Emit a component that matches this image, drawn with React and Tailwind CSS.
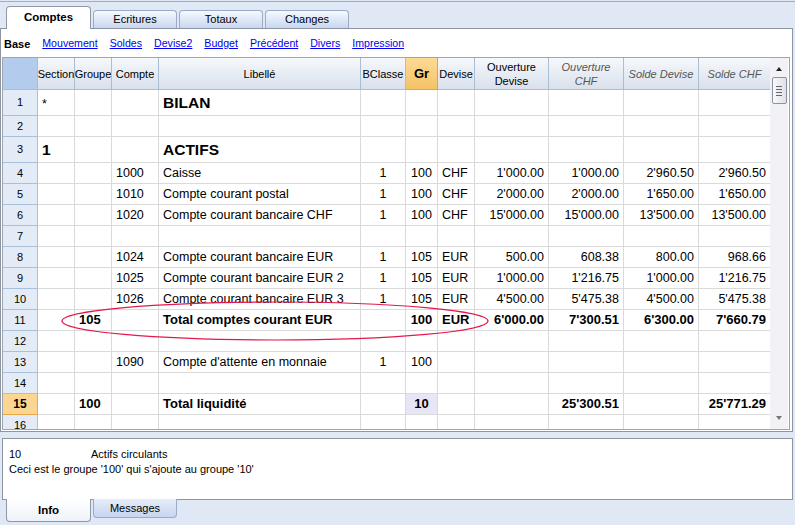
import React from 'react';

const COLS = 'grid grid-cols-[35px_37px_37px_47px_202px_45px_32px_37px_74px_75px_75px_72px]';

const rows = [
  { n: 1, tall: true, section: '*', lib: 'BILAN', big: true },
  { n: 2 },
  { n: 3, tall: true, section: '1', lib: 'ACTIFS', big: true },
  { n: 4, compte: '1000', lib: 'Caisse', bc: '1', gr: '100', dev: 'CHF', od: "1'000.00", oc: "1'000.00", sd: "2'960.50", sc: "2'960.50" },
  { n: 5, compte: '1010', lib: 'Compte courant postal', bc: '1', gr: '100', dev: 'CHF', od: "2'000.00", oc: "2'000.00", sd: "1'650.00", sc: "1'650.00" },
  { n: 6, compte: '1020', lib: 'Compte courant bancaire CHF', bc: '1', gr: '100', dev: 'CHF', od: "15'000.00", oc: "15'000.00", sd: "13'500.00", sc: "13'500.00" },
  { n: 7 },
  { n: 8, compte: '1024', lib: 'Compte courant bancaire EUR', bc: '1', gr: '105', dev: 'EUR', od: '500.00', oc: '608.38', sd: '800.00', sc: '968.66' },
  { n: 9, compte: '1025', lib: 'Compte courant bancaire EUR 2', bc: '1', gr: '105', dev: 'EUR', od: "1'000.00", oc: "1'216.75", sd: "1'000.00", sc: "1'216.75" },
  { n: 10, compte: '1026', lib: 'Compte courant bancaire EUR 3', bc: '1', gr: '105', dev: 'EUR', od: "4'500.00", oc: "5'475.38", sd: "4'500.00", sc: "5'475.38" },
  { n: 11, bold: true, groupe: '105', lib: 'Total comptes courant EUR', gr: '100', dev: 'EUR', od: "6'000.00", oc: "7'300.51", sd: "6'300.00", sc: "7'660.79" },
  { n: 12 },
  { n: 13, compte: '1090', lib: "Compte d'attente en monnaie", bc: '1', gr: '100' },
  { n: 14 },
  { n: 15, bold: true, current: true, groupe: '100', lib: 'Total liquidité', gr: '10', oc: "25'300.51", sc: "25'771.29" },
  { n: 16 },
];

const links = ['Mouvement', 'Soldes', 'Devise2', 'Budget', 'Précédent', 'Divers', 'Impression'];

function HeadCell({ children, italic, center = true }) {
  return (
    <div
      className={`flex items-center overflow-hidden whitespace-nowrap border-r border-b border-[#a9bdd5] bg-linear-to-b from-[#f6f8fb] to-[#d9e1ec] text-[11px] leading-[14px] ${
        center ? 'justify-center text-center' : ''
      } ${italic ? 'italic text-[#555]' : 'text-black'}`}
    >
      {children}
    </div>
  );
}

function Cell({ children, align = 'left', bold, big, extra = '' }) {
  const alignCls = align === 'right' ? 'justify-end pr-[4px]' : align === 'center' ? 'justify-center' : 'pl-[4px]';
  const font = big ? 'text-[15.5px] font-bold' : bold ? 'text-[13px] font-bold' : 'text-[12.5px]';
  return (
    <div className={`flex items-center overflow-hidden whitespace-nowrap border-r border-b border-[#dadada] ${alignCls} ${font} ${extra}`}>
      {children}
    </div>
  );
}

function Row({ r }) {
  const b = r.bold;
  return (
    <div className={`${COLS} ${r.tall ? 'h-[26px]' : 'h-[21px]'}`}>
      <div
        className={`flex items-center justify-center border-r border-b text-[11px] ${
          r.current ? 'bg-[#fcd592] border-[#eaa845] font-bold text-[12px]' : 'bg-[#e3ebf6] border-[#a9c0da]'
        }`}
      >
        {r.n}
      </div>
      <Cell big={r.section === '1'} extra={r.section === '*' ? 'items-start pt-[5px]' : ''}>{r.section}</Cell>
      <Cell bold={b}>{r.groupe}</Cell>
      <Cell>{r.compte}</Cell>
      <Cell bold={b} big={r.big}>{r.lib}</Cell>
      <Cell align="center">{r.bc}</Cell>
      <Cell align="center" bold={b} extra={r.current ? 'bg-[#e6e6f6]' : ''}>{r.gr}</Cell>
      <Cell bold={b}>{r.dev}</Cell>
      <Cell align="right" bold={b}>{r.od}</Cell>
      <Cell align="right" bold={b}>{r.oc}</Cell>
      <Cell align="right" bold={b}>{r.sd}</Cell>
      <Cell align="right" bold={b}>{r.sc}</Cell>
    </div>
  );
}

function Scrollbar() {
  return (
    <div className="flex w-[18px] flex-col items-center bg-[#f2f1f5]">
      <div className="flex h-[19px] w-full items-center justify-center pt-[2px]">
        <svg width="6" height="4" viewBox="0 0 6 4">
          <path d="M0 4 L3 0 L6 4 Z" fill="#222" />
        </svg>
      </div>
      <div className="flex h-[27px] w-[15px] flex-col items-center justify-center gap-[2px] rounded-[2px] border border-[#8a93a5] bg-linear-to-r from-[#fafafb] to-[#dfe0e6]">
        <div className="h-px w-[6px] bg-[#666]" />
        <div className="h-px w-[6px] bg-[#666]" />
        <div className="h-px w-[6px] bg-[#666]" />
        <div className="h-px w-[6px] bg-[#666]" />
      </div>
      <div className="flex-1" />
      <div className="flex h-[18px] w-full items-center justify-center pb-[4px]">
        <svg width="6" height="4" viewBox="0 0 6 4">
          <path d="M0 0 L3 4 L6 0 Z" fill="#777" />
        </svg>
      </div>
    </div>
  );
}

export default function App() {
  return (
    <div className="relative h-[525px] w-[795px] overflow-hidden bg-[#dfe8f4] font-['Liberation_Sans',Arial,sans-serif] text-black">
      <div className="mt-px h-px bg-[#a4adba]" />

      {/* top tabs */}
      <div className="flex h-[26px] items-end gap-[2px] pl-[6px]">
        <div className="relative z-10 -mb-px flex h-[23px] w-[85px] items-center justify-center rounded-t-[4px] border border-b-0 border-[#8f98a6] bg-white text-[11.5px] font-bold">
          Comptes
        </div>
        {['Ecritures', 'Totaux', 'Changes'].map((t) => (
          <div
            key={t}
            className="flex h-[18px] w-[84px] items-center justify-center rounded-t-[4px] border border-b-0 border-[#9aabc9] bg-linear-to-b from-[#f7f9fd] to-[#c8d7f1] text-[11px]"
          >
            {t}
          </div>
        ))}
      </div>

      {/* main panel */}
      <div className="h-[404px] w-[793px] border border-[#8d95a1] bg-white">
        <div className="flex h-[28px] items-center gap-[12px] pl-[3px] pt-[2px] text-[10.6px]">
          <span className="text-[11px] font-bold">Base</span>
          {links.map((l) => (
            <span key={l} className="text-[#0000ee] underline">
              {l}
            </span>
          ))}
        </div>

        <div className="ml-px flex h-[373px] w-[788px] overflow-hidden border border-[#9ea5ae]">
          <div className="relative w-[767px] overflow-hidden">
            <div className={`${COLS} h-[32px]`}>
              <div className="border-r border-b border-[#a9bdd5] bg-[#b3cbed]" />
              <HeadCell>Section</HeadCell>
              <HeadCell>Groupe</HeadCell>
              <HeadCell>Compte</HeadCell>
              <HeadCell>Libellé</HeadCell>
              <HeadCell>BClasse</HeadCell>
              <div className="flex items-center justify-center border-r border-b border-[#e8a23a] bg-linear-to-b from-[#fcdb96] to-[#f5c265] text-[13px] font-bold">
                Gr
              </div>
              <HeadCell>Devise</HeadCell>
              <HeadCell>
                <span>
                  Ouverture
                  <br />
                  Devise
                </span>
              </HeadCell>
              <HeadCell italic>
                <span>
                  Ouverture
                  <br />
                  CHF
                </span>
              </HeadCell>
              <HeadCell italic>Solde Devise</HeadCell>
              <HeadCell italic>Solde CHF</HeadCell>
            </div>
            {rows.map((r) => (
              <Row key={r.n} r={r} />
            ))}
          </div>
          <Scrollbar />
        </div>
      </div>

      {/* info panel */}
      <div className="ml-[2px] mt-[6px] h-[62px] w-[791px] border border-[#8d95a1] bg-white px-[6px] pt-[8px] text-[11px] leading-[15px]">
        <div className="flex">
          <span className="w-[82px]">10</span>
          <span>Actifs circulants</span>
        </div>
        <div>Ceci est le groupe '100' qui s'ajoute au groupe '10'</div>
      </div>

      {/* bottom tabs */}
      <div className="flex items-start gap-[2px] pl-[6px]">
        <div className="relative z-10 -mt-px flex h-[23px] w-[85px] items-center justify-center rounded-b-[4px] border border-t-0 border-[#8f98a6] bg-linear-to-b from-white to-[#eef2f8] pt-[2px] text-[11.5px] font-bold">
          Info
        </div>
        <div className="-mt-px flex h-[19px] w-[84px] items-center justify-center rounded-b-[4px] border border-t-0 border-[#9aabc9] bg-linear-to-b from-[#e6edf9] to-[#c6d5f0] text-[11px]">
          Messages
        </div>
      </div>

      {/* red highlight ellipse */}
      <svg className="pointer-events-none absolute left-0 top-0" width="795" height="525">
        <ellipse cx="275" cy="321" rx="213" ry="19" fill="none" stroke="#e5184b" strokeWidth="1.2" />
      </svg>
    </div>
  );
}
